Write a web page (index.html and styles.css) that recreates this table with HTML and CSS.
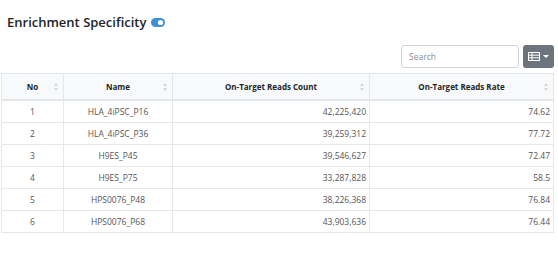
FILE: index.html
```html
<!DOCTYPE html>
<html lang="en">
<head>
    <meta charset="UTF-8">
    <title>Enrichment Specificity</title>
    <link rel="stylesheet" href="styles.css">
</head>
<body>
    <div class="page">
        <h2 class="title">
            Enrichment Specificity
            <svg class="toggle" width="14" height="9" viewBox="0 0 14 9">
                <rect x="0" y="0" width="14" height="9" rx="4.5" fill="#3d8fd6"/>
                <circle cx="9.5" cy="4.5" r="2.6" fill="#fff"/>
            </svg>
        </h2>

        <div class="toolbar">
            <input type="text" class="search" placeholder="Search">
            <button class="btn-columns">
                <svg width="12" height="9" viewBox="0 0 12 9">
                    <rect x="0.5" y="0.5" width="11" height="8" fill="none" stroke="#fff"/>
                    <line x1="0" y1="3.2" x2="12" y2="3.2" stroke="#fff"/>
                    <line x1="0" y1="5.8" x2="12" y2="5.8" stroke="#fff"/>
                    <line x1="4" y1="0" x2="4" y2="9" stroke="#fff"/>
                </svg>
                <span class="caret"></span>
            </button>
        </div>

        <table class="data-table">
            <colgroup>
                <col style="width: 62px">
                <col style="width: 109px">
                <col style="width: 197px">
                <col>
            </colgroup>
            <thead>
                <tr>
                    <th>No <span class="sort"></span></th>
                    <th>Name <span class="sort"></span></th>
                    <th>On-Target Reads Count <span class="sort"></span></th>
                    <th>On-Target Reads Rate <span class="sort"></span></th>
                </tr>
            </thead>
            <tbody>
                <tr><td class="center">1</td><td class="center">HLA_4iPSC_P16</td><td class="num">42,225,420</td><td class="num">74.62</td></tr>
                <tr><td class="center">2</td><td class="center">HLA_4iPSC_P36</td><td class="num">39,259,312</td><td class="num">77.72</td></tr>
                <tr><td class="center">3</td><td class="center">H9ES_P45</td><td class="num">39,546,627</td><td class="num">72.47</td></tr>
                <tr><td class="center">4</td><td class="center">H9ES_P75</td><td class="num">33,287,828</td><td class="num">58.5</td></tr>
                <tr><td class="center">5</td><td class="center">HPS0076_P48</td><td class="num">38,226,368</td><td class="num">76.84</td></tr>
                <tr><td class="center">6</td><td class="center">HPS0076_P68</td><td class="num">43,903,636</td><td class="num">76.44</td></tr>
            </tbody>
        </table>
    </div>
</body>
</html>
```

FILE: styles.css
```css
body {
    margin: 0;
    font-family: 'Open Sans', 'Noto Sans', sans-serif;
    color: #212529;
    background: #fff;
}

.page {
    width: 553px;
    padding: 0 0 0 1px;
}

.title {
    margin: 0;
    padding: 11px 0 0 6px;
    height: 33px;
    box-sizing: border-box;
    font-size: 13px;
    font-weight: 600;
    color: #212529;
    display: flex;
    align-items: center;
    gap: 5px;
}

.toolbar {
    display: flex;
    justify-content: flex-end;
    gap: 4px;
    margin-top: 12px;
    margin-bottom: 5px;
}

.search {
    width: 118px;
    height: 23px;
    box-sizing: border-box;
    border: 1px solid #ced4da;
    border-radius: 3px;
    padding: 0 7px;
    font-family: inherit;
    font-size: 8.5px;
    color: #495057;
}

.search::placeholder {
    color: #8a9096;
}

.btn-columns {
    width: 31px;
    height: 23px;
    border: none;
    border-radius: 3px;
    background-color: #6c757d;
    display: flex;
    align-items: center;
    justify-content: center;
    gap: 3px;
    padding: 0;
}

.caret {
    width: 0;
    height: 0;
    border-left: 3px solid transparent;
    border-right: 3px solid transparent;
    border-top: 3px solid #fff;
}

.data-table {
    width: 553px;
    border-collapse: collapse;
    table-layout: fixed;
    font-size: 8.5px;
}

.data-table th,
.data-table td {
    border: 1px solid #e4e7ea;
    padding: 0 3px;
}

.data-table th {
    position: relative;
    height: 25px;
    background-color: #f8f9fa;
    border-bottom: 2px solid #e4e7ea;
    font-size: 8px;
    font-weight: 700;
    text-align: center;
    color: #212529;
}

.data-table td {
    height: 21px;
    color: #555;
}

.center {
    text-align: center;
}

.num {
    text-align: right;
}

.sort {
    position: absolute;
    right: 4px;
    top: 50%;
    margin-top: -4px;
    width: 5px;
    height: 8px;
}

.sort::before,
.sort::after {
    content: '';
    position: absolute;
    left: 0;
    border-left: 2.5px solid transparent;
    border-right: 2.5px solid transparent;
}

.sort::before {
    top: 0;
    border-bottom: 3px solid #d3d6d9;
}

.sort::after {
    bottom: 0;
    border-top: 3px solid #d3d6d9;
}
```
